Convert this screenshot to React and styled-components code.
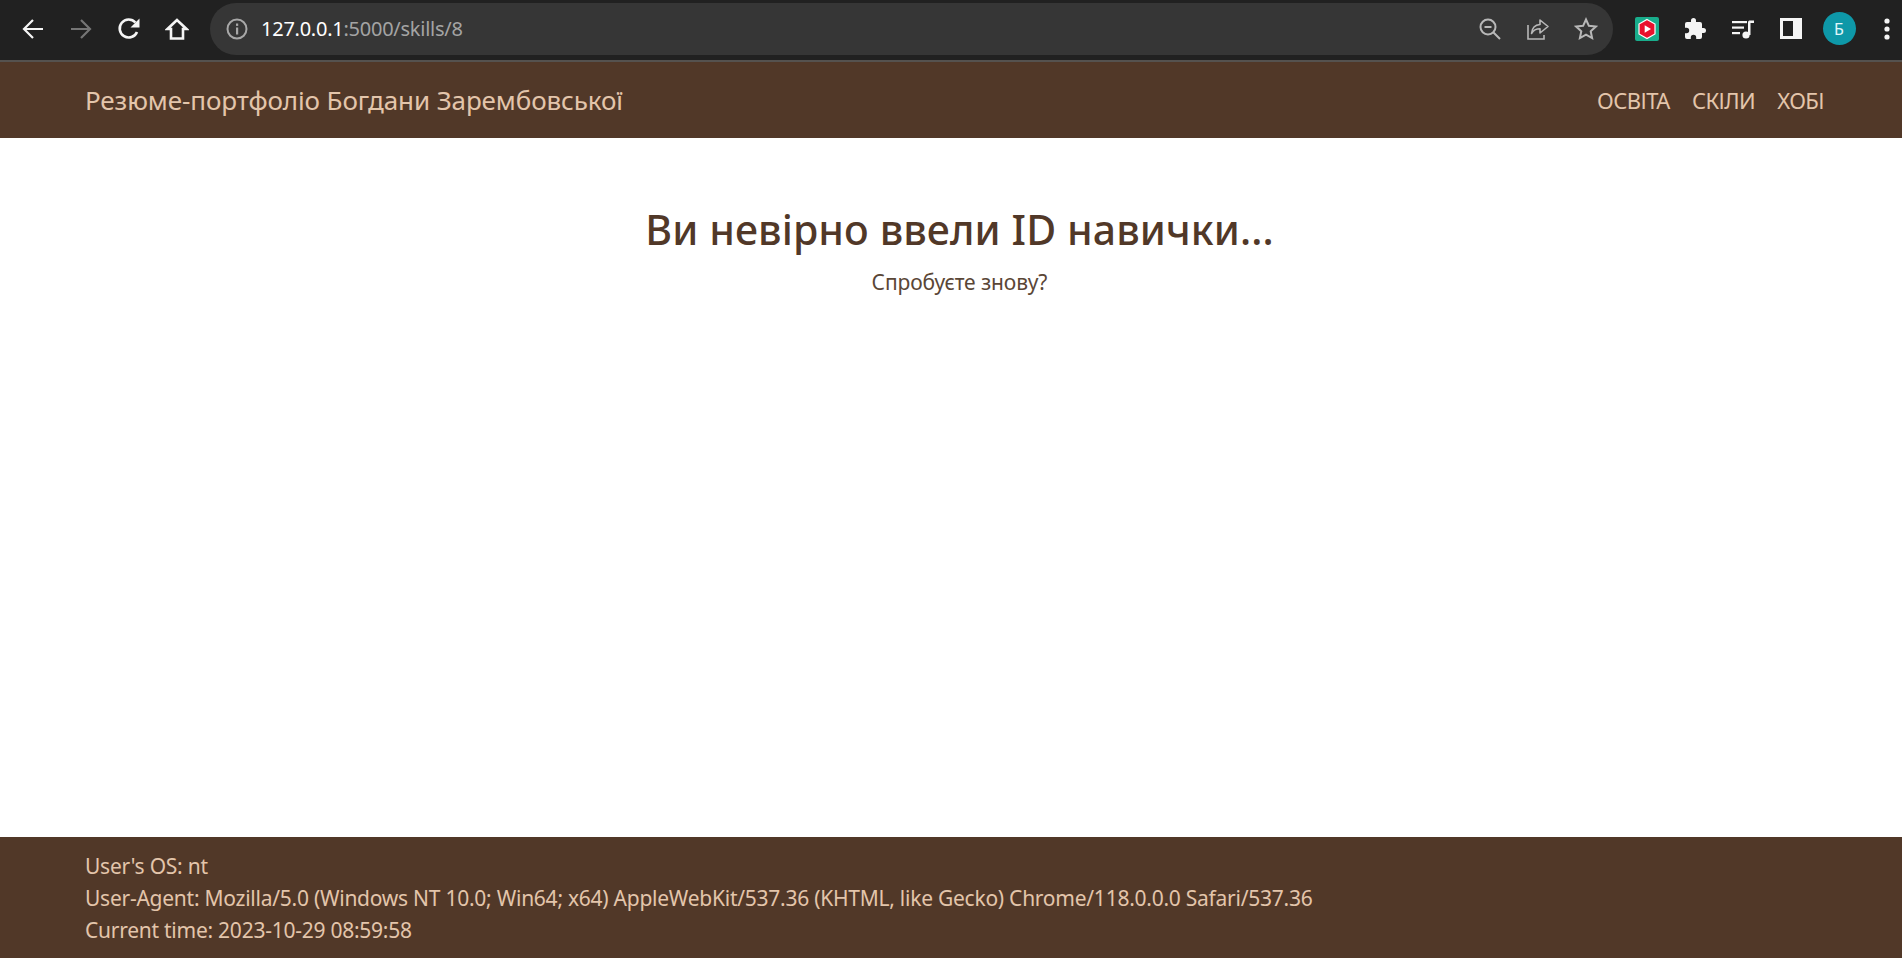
import React from 'react';
import styled, { createGlobalStyle } from 'styled-components';

const Global = createGlobalStyle`
  html, body { margin: 0; padding: 0; height: 100%; background: #fff; overflow: hidden; }
  #root { height: 100%; }
  * { box-sizing: border-box; }
`;

const Page = styled.div`
  height: 958px;
  display: flex;
  flex-direction: column;
  font-family: "Noto Sans", "Open Sans", sans-serif;
`;

const Chrome = styled.div`
  height: 62px;
  flex: none;
  background: #212121;
  border-bottom: 2px solid #55524f;
  display: flex;
  align-items: center;
  padding: 0 0 3px 9px;
`;

const NavIcon = styled.div`
  width: 48px;
  height: 36px;
  flex: none;
  display: flex;
  align-items: center;
  justify-content: center;
  color: ${p => (p.$dim ? '#757575' : '#f5f5f5')};
`;

const NavGroup = styled.div`
  display: flex;
  align-items: center;
`;

const Omnibox = styled.div`
  flex: none;
  width: 1403px;
  height: 52px;
  margin-left: 9px;
  border-radius: 26px;
  background: #363636;
  display: flex;
  align-items: center;
  padding: 0 3px 0 16px;
`;

const Url = styled.div`
  flex: 1;
  margin-left: 13px;
  font-size: 20px;
  letter-spacing: -0.25px;
  color: #a4a4a4;
  b { font-weight: 400; color: #fff; }
`;

const OmniIcon = styled.div`
  width: 48px;
  display: flex;
  justify-content: center;
  color: #b8b8b8;
`;

const Extensions = styled.div`
  display: flex;
  align-items: center;
  margin-left: 10px;
  flex: 1;
`;

const ExtSlot = styled.div`
  width: 48px;
  height: 36px;
  flex: none;
  display: flex;
  align-items: center;
  justify-content: center;
  color: #f5f5f5;
`;

const Avatar = styled.div`
  width: 33px;
  height: 33px;
  border-radius: 50%;
  background: #0e98a8;
  color: #e0f7fa;
  font-size: 16px;
  display: flex;
  align-items: center;
  justify-content: center;
`;

const Navbar = styled.header`
  height: 76px;
  flex: none;
  background: #513828;
  color: #e3c5ab;
  display: flex;
  align-items: center;
  justify-content: space-between;
  padding: 0 78px 0 85px;
`;

const Brand = styled.a`
  font-size: 26px;
  letter-spacing: -0.1px;
`;

const Links = styled.nav`
  display: flex;
  gap: 22px;
`;

const Link = styled.a`
  font-size: 22px;
  letter-spacing: -0.55px;
`;

const Main = styled.main`
  flex: 1;
  display: flex;
  flex-direction: column;
  align-items: center;
  padding: 66px 0 0 17px;
  color: #513828;
`;

const Heading = styled.h1`
  margin: 0;
  font-size: 41px;
  line-height: 50px;
  font-weight: 500;
  letter-spacing: 0.1px;
`;

const Sub = styled.p`
  margin: 13px 0 0;
  font-size: 21px;
  line-height: 30px;
  letter-spacing: -0.1px;
  color: #5a4636;
`;

const Footer = styled.footer`
  height: 121px;
  flex: none;
  background: #513828;
  color: #e3c5ab;
  padding: 13px 85px 0;
  font-size: 21px;
  line-height: 32px;
  letter-spacing: -0.25px;
`;

const Stroke = ({ size = 24, width = 2, children }) => (
  <svg width={size} height={size} viewBox="0 0 24 24" fill="none" stroke="currentColor" strokeWidth={width}>
    {children}
  </svg>
);

const BackIcon = () => (
  <Stroke width={2.2}><path d="M22 12H3.5M12 3l-9 9 9 9" /></Stroke>
);

const ForwardIcon = () => (
  <Stroke width={2.2}><path d="M2 12h18.5M12 3l9 9-9 9" /></Stroke>
);

const ReloadIcon = () => (
  <svg width="24" height="24" viewBox="0 0 24 24">
    <path d="M20 15a9 9 0 1 1-1.6-9.5" fill="none" stroke="currentColor" strokeWidth="2.6" />
    <path d="M22.5 1.5v9h-9z" fill="currentColor" />
  </svg>
);

const HomeIcon = () => (
  <Stroke width={2.6}><path d="M12 3 2.5 12H6v9.5h12V12h3.5z" strokeLinejoin="miter" /></Stroke>
);

const InfoIcon = () => (
  <svg width="22" height="22" viewBox="0 0 22 22">
    <circle cx="11" cy="11" r="9.5" fill="none" stroke="#a8a8a8" strokeWidth="2" />
    <rect x="10" y="9.5" width="2.2" height="7" fill="#a8a8a8" />
    <rect x="10" y="5.5" width="2.2" height="2.4" fill="#a8a8a8" />
  </svg>
);

const ZoomIcon = () => (
  <Stroke><circle cx="10" cy="10" r="7.5" /><path d="M6.5 10h7M15.5 15.5 22 22" /></Stroke>
);

const ShareIcon = () => (
  <Stroke width={1.6}>
    <path d="M2 8v14h16v-4" />
    <path d="M14 3v4.5c-5 .3-8 3.5-8.5 9 2-3.5 4.5-4.7 8.5-4.7V16l8-6.5z" strokeLinejoin="round" />
  </Stroke>
);

const StarIcon = () => (
  <Stroke><path d="m12 2.5 2.9 6.3 6.9.8-5.1 4.7 1.4 6.8-6.1-3.4-6.1 3.4 1.4-6.8-5.1-4.7 6.9-.8z" /></Stroke>
);

const YoutubeBadge = () => (
  <svg width="24" height="24" viewBox="0 0 24 24">
    <rect width="24" height="24" rx="2" fill="#19ad8c" />
    <path d="M12 2.5 20 7v10l-8 4.5L4 17V7z" fill="#e8112d" stroke="#fff" strokeWidth="1.2" />
    <path d="M9.7 8.2 16 12l-6.3 3.8z" fill="#fff" />
  </svg>
);

const PuzzleFilled = () => (
  <svg width="24" height="24" viewBox="0 0 24 24" fill="currentColor">
    <path d="M20.5 11H19V7a2 2 0 0 0-2-2h-4V3.5a2.5 2.5 0 0 0-5 0V5H4a2 2 0 0 0-2 2v3.8h1.5a2.7 2.7 0 0 1 0 5.4H2V20a2 2 0 0 0 2 2h3.8v-1.5a2.7 2.7 0 0 1 5.4 0V22H17a2 2 0 0 0 2-2v-4h1.5a2.5 2.5 0 0 0 0-5z" />
  </svg>
);

const QueueIcon = () => (
  <svg width="24" height="24" viewBox="0 0 24 24" fill="currentColor">
    <rect x="1" y="4" width="15" height="2.2" />
    <rect x="1" y="9.5" width="12" height="2.2" />
    <rect x="1" y="15" width="8" height="2.2" />
    <circle cx="15" cy="18" r="3.6" />
    <path d="M17 18V5.5c0-1.5 1-2 2-2h4v2.4h-3.5V18z" />
  </svg>
);

const SidePanel = () => (
  <svg width="22" height="21" viewBox="0 0 22 21">
    <rect width="22" height="21" fill="#f5f5f5" />
    <rect x="3" y="3" width="10" height="15" fill="#212121" />
  </svg>
);

const DotsIcon = () => (
  <svg width="6" height="22" viewBox="0 0 6 22" fill="currentColor">
    <circle cx="3" cy="3" r="2.6" />
    <circle cx="3" cy="11" r="2.6" />
    <circle cx="3" cy="19" r="2.6" />
  </svg>
);

export default function App() {
  return (
    <Page>
      <Global />
      <Chrome>
        <NavGroup>
          <NavIcon><BackIcon /></NavIcon>
          <NavIcon $dim><ForwardIcon /></NavIcon>
          <NavIcon><ReloadIcon /></NavIcon>
          <NavIcon><HomeIcon /></NavIcon>
        </NavGroup>
        <Omnibox>
          <InfoIcon />
          <Url><b>127.0.0.1</b>:5000/skills/8</Url>
          <OmniIcon><ZoomIcon /></OmniIcon>
          <OmniIcon><ShareIcon /></OmniIcon>
          <OmniIcon><StarIcon /></OmniIcon>
        </Omnibox>
        <Extensions>
          <ExtSlot><YoutubeBadge /></ExtSlot>
          <ExtSlot><PuzzleFilled /></ExtSlot>
          <ExtSlot><QueueIcon /></ExtSlot>
          <ExtSlot><SidePanel /></ExtSlot>
          <ExtSlot><Avatar>Б</Avatar></ExtSlot>
          <ExtSlot><DotsIcon /></ExtSlot>
        </Extensions>
      </Chrome>
      <Navbar>
        <Brand>Резюме-портфоліо Богдани Зарембовської</Brand>
        <Links>
          <Link>ОСВІТА</Link>
          <Link>СКІЛИ</Link>
          <Link>ХОБІ</Link>
        </Links>
      </Navbar>
      <Main>
        <Heading>Ви невірно ввели ID навички...</Heading>
        <Sub>Спробуєте знову?</Sub>
      </Main>
      <Footer>
        <div>User's OS: nt</div>
        <div>User-Agent: Mozilla/5.0 (Windows NT 10.0; Win64; x64) AppleWebKit/537.36 (KHTML, like Gecko) Chrome/118.0.0.0 Safari/537.36</div>
        <div>Current time: 2023-10-29 08:59:58</div>
      </Footer>
    </Page>
  );
}
